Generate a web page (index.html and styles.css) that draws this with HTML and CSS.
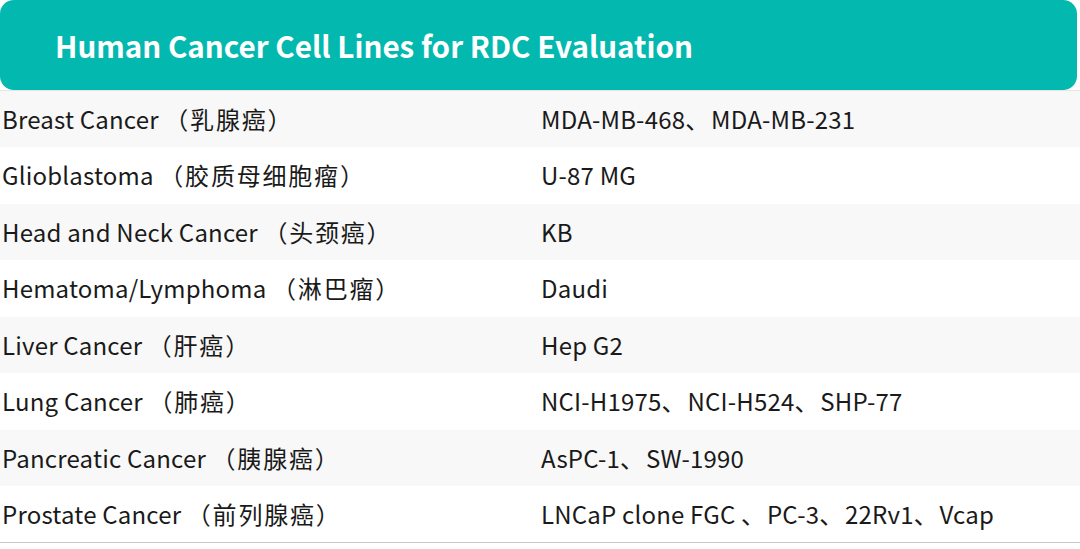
FILE: index.html
```html
<!DOCTYPE html>
<html>
<head>
<meta charset="utf-8">
<link rel="stylesheet" href="styles.css">
</head>
<body>
<div class="page">
  <div class="header"><h1 class="title">Human Cancer Cell Lines for RDC Evaluation</h1></div>
  <table class="grid">
    <tbody>
      <tr><td class="c1">Breast Cancer <span class="cjk">（乳腺癌）</span></td><td class="c2">MDA-MB-468<span class="cjk">、</span>MDA-MB-231</td></tr>
      <tr><td class="c1">Glioblastoma <span class="cjk">（胶质母细胞瘤）</span></td><td class="c2">U-87 MG</td></tr>
      <tr><td class="c1">Head and Neck Cancer <span class="cjk">（头颈癌）</span></td><td class="c2">KB</td></tr>
      <tr><td class="c1">Hematoma/Lymphoma <span class="cjk">（淋巴瘤）</span></td><td class="c2">Daudi</td></tr>
      <tr><td class="c1">Liver Cancer <span class="cjk">（肝癌）</span></td><td class="c2">Hep G2</td></tr>
      <tr><td class="c1">Lung Cancer <span class="cjk">（肺癌）</span></td><td class="c2">NCI-H1975<span class="cjk">、</span>NCI-H524<span class="cjk">、</span>SHP-77</td></tr>
      <tr><td class="c1">Pancreatic Cancer <span class="cjk">（胰腺癌）</span></td><td class="c2">AsPC-1<span class="cjk">、</span>SW-1990</td></tr>
      <tr><td class="c1">Prostate Cancer <span class="cjk">（前列腺癌）</span></td><td class="c2">LNCaP clone FGC <span class="cjk">、</span>PC-3<span class="cjk">、</span>22Rv1<span class="cjk">、</span>Vcap</td></tr>
    </tbody>
  </table>
</div>
</body>
</html>
```
FILE: styles.css
```css
html, body {
  margin: 0;
  padding: 0;
  background: #ffffff;
}
.page {
  width: 1080px;
  font-family: "Noto Sans CJK SC", "Noto Sans", sans-serif;
  color: #1a1a1a;
}
.header {
  width: 1077px;
  height: 90px;
  background: #03b9af;
  border-radius: 14px;
  display: flex;
  align-items: center;
  box-sizing: border-box;
  padding-left: 55px;
  padding-bottom: 0;
}
.title {
  margin: 0;
  font-size: 29.6px;
  font-weight: 700;
  color: #ffffff;
  letter-spacing: 0;
}
.grid {
  width: 1080px;
  border-collapse: collapse;
  border-top: 1px solid #e6e6e6;
  border-bottom: 1px solid #c8c8c8;
}
.grid tr {
  height: 56.5px;
}
.grid tr:nth-child(odd) {
  background: #f8f8f8;
}
.grid td {
  padding: 0;
  font-size: 24px;
  line-height: 1;
  letter-spacing: 0.2px;
  vertical-align: middle;
  white-space: nowrap;
}
.cjk {
  letter-spacing: 1.8px;
}
.c1 {
  width: 539px;
  padding-left: 2px !important;
}
.c2 {
  padding-left: 0;
}
```
